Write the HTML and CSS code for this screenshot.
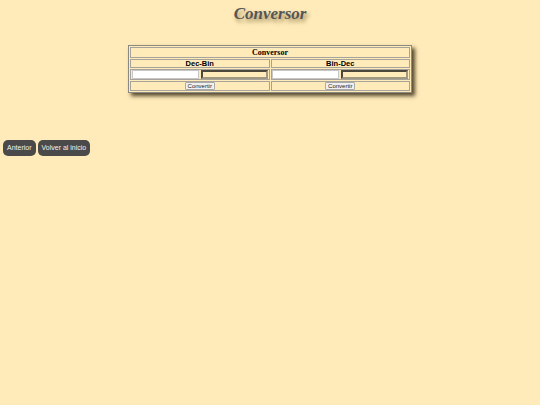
FILE: index.html
```html
<!DOCTYPE html>
<html lang="es">
<head>
<meta charset="utf-8">
<title>Conversor</title>
<link rel="stylesheet" href="styles.css">
</head>
<body>
<h1 class="title">Conversor</h1>
<table class="conv">
  <tr><th colspan="2" class="head">Conversor</th></tr>
  <tr><th class="sub">Dec-Bin</th><th class="sub">Bin-Dec</th></tr>
  <tr>
    <td class="io"><div class="pair"><input class="in" type="text"><input class="out" type="text" readonly></div></td>
    <td class="io"><div class="pair"><input class="in" type="text"><input class="out" type="text" readonly></div></td>
  </tr>
  <tr>
    <td class="act"><button class="btn">Convertir</button></td>
    <td class="act"><button class="btn">Convertir</button></td>
  </tr>
</table>
<nav class="nav">
  <a class="navbtn" href="#">Anterior</a>
  <a class="navbtn" href="#">Volver al inicio</a>
</nav>
</body>
</html>
```
FILE: styles.css
```css
html, body {
  margin: 0;
  padding: 0;
  background: #ffebb9;
}
body {
  font-family: "Liberation Sans", Arial, sans-serif;
}
.title {
  margin: 0;
  padding-top: 4px;
  text-align: center;
  font-family: "Liberation Serif", "Times New Roman", serif;
  font-style: italic;
  font-weight: bold;
  font-size: 17px;
  line-height: 20px;
  color: #555;
  text-shadow: 2px 3px 4px rgba(90, 70, 30, 0.6);
}
.conv {
  margin: 21px auto 0;
  width: 284px;
  border: 1px solid #8a8a80;
  border-spacing: 1px;
  box-shadow: 3px 3px 4px rgba(40, 30, 10, 0.8);
  background: #ffebb9;
}
.conv th, .conv td {
  border: 1px solid #a8a39a;
  padding: 0;
  text-align: center;
}
.conv .head {
  font-family: "Liberation Serif", "Times New Roman", serif;
  font-size: 8px;
  height: 9px;
  line-height: 9px;
  color: #000;
}
.conv .sub {
  font-size: 7.5px;
  height: 7px;
  line-height: 7px;
  color: #000;
}
.conv .io {
  height: 9px;
}
.pair {
  display: flex;
  gap: 2px;
  justify-content: center;
}
.pair input {
  box-sizing: border-box;
  width: 67px;
  height: 9px;
  margin: 0;
  padding: 0;
  font-size: 6px;
}
.in {
  background: #fff;
  border: 1px solid #c8c8c8;
}
.out {
  background: #ffebb9;
  border: 2px inset #a09880;
}
.conv .act {
  height: 8px;
}
.btn {
  box-sizing: border-box;
  height: 8px;
  width: 30px;
  padding: 0;
  font-family: "Liberation Sans", Arial, sans-serif;
  font-size: 6px;
  line-height: 6px;
  color: #222;
  background: #f0f0f0;
  border: 1px solid #aaa;
  border-radius: 1px;
  display: block;
  margin: 0 auto;
}
.nav {
  display: flex;
  gap: 2px;
  margin: 47px 0 0 3px;
}
.navbtn {
  display: block;
  height: 16px;
  line-height: 16px;
  padding: 0 4px;
  border-radius: 5px;
  background: #4a4a4a;
  color: #f2f2f2;
  font-size: 7px;
  text-decoration: none;
}
```
